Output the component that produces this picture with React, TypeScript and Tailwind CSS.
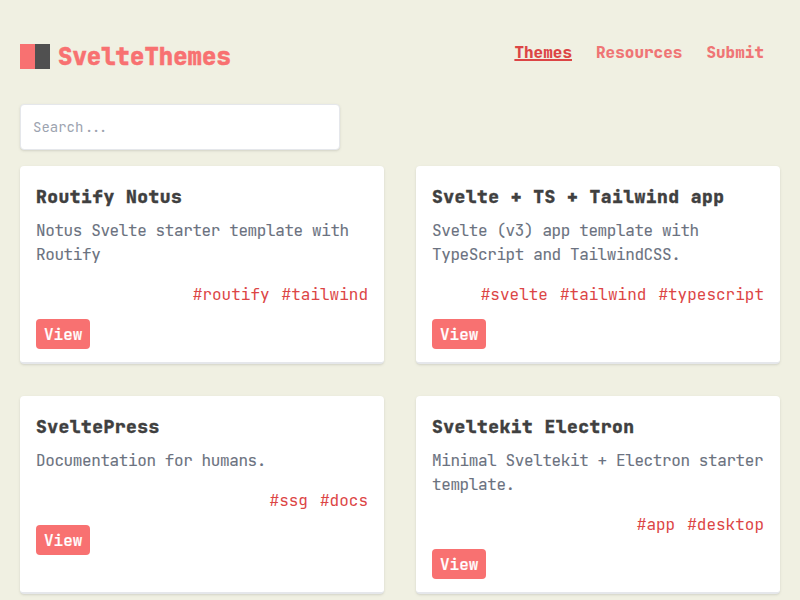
interface Theme {
  title: string;
  description: string;
  tags: string[];
}

const themes: Theme[] = [
  {
    title: "Routify Notus",
    description: "Notus Svelte starter template with Routify",
    tags: ["routify", "tailwind"],
  },
  {
    title: "Svelte + TS + Tailwind app",
    description: "Svelte (v3) app template with TypeScript and TailwindCSS.",
    tags: ["svelte", "tailwind", "typescript"],
  },
  {
    title: "SveltePress",
    description: "Documentation for humans.",
    tags: ["ssg", "docs"],
  },
  {
    title: "Sveltekit Electron",
    description: "Minimal Sveltekit + Electron starter template.",
    tags: ["app", "desktop"],
  },
];

function Header() {
  return (
    <header className="flex h-[104px] items-start justify-between pt-10">
      <a href="#" className="flex items-center gap-2">
        <span className="flex h-[25px] w-[30px]" aria-hidden="true">
          <span className="w-1/2 bg-[#f87171]" />
          <span className="w-1/2 bg-[#505050]" />
        </span>
        <span className="mt-px text-2xl font-extrabold text-[#f87171] [-webkit-text-stroke:0.5px_#f87171]">
          SvelteThemes
        </span>
      </a>
      <nav className="flex gap-6 pt-px pr-4 font-extrabold text-[#ef7575]">
        <a href="#" className="text-[#dc4545] underline decoration-2">
          Themes
        </a>
        <a href="#">Resources</a>
        <a href="#">Submit</a>
      </nav>
    </header>
  );
}

function ThemeCard({ title, description, tags }: Theme) {
  return (
    <article className="flex h-[198px] flex-col items-start rounded border-b-2 border-[#e5e7eb] bg-white px-4 pt-[17px] shadow-sm">
      <h2 className="text-lg font-extrabold tracking-wide text-[#404040] [-webkit-text-stroke:0.3px_#404040]">
        {title}
      </h2>
      <p className="mt-2 tracking-tight text-[#6b7280] [-webkit-text-stroke:0.1px_#6b7280]">{description}</p>
      <div className="mt-4 flex gap-3 self-end text-[#dc4545]">
        {tags.map((tag) => (
          <a key={tag} href="#">
            #{tag}
          </a>
        ))}
      </div>
      <button className="mt-3 h-[29.5px] rounded bg-[#f87171] px-2 pt-0.5 font-medium text-white [-webkit-text-stroke:0.2px_white]">
        View
      </button>
    </article>
  );
}

export default function App() {
  return (
    <div className="h-[600px] overflow-hidden bg-[#f0f0e2] px-5 font-['JetBrains_Mono','DejaVu_Sans_Mono',monospace]">
      <Header />
      <input
        type="text"
        placeholder="Search..."
        className="block h-[46px] w-80 rounded border border-[#e5e7eb] bg-white px-3 text-sm shadow-sm outline-none placeholder:text-[#9ca3af]"
      />
      <main className="mt-4 grid grid-cols-2 gap-8">
        {themes.map((theme) => (
          <ThemeCard key={theme.title} {...theme} />
        ))}
      </main>
    </div>
  );
}
